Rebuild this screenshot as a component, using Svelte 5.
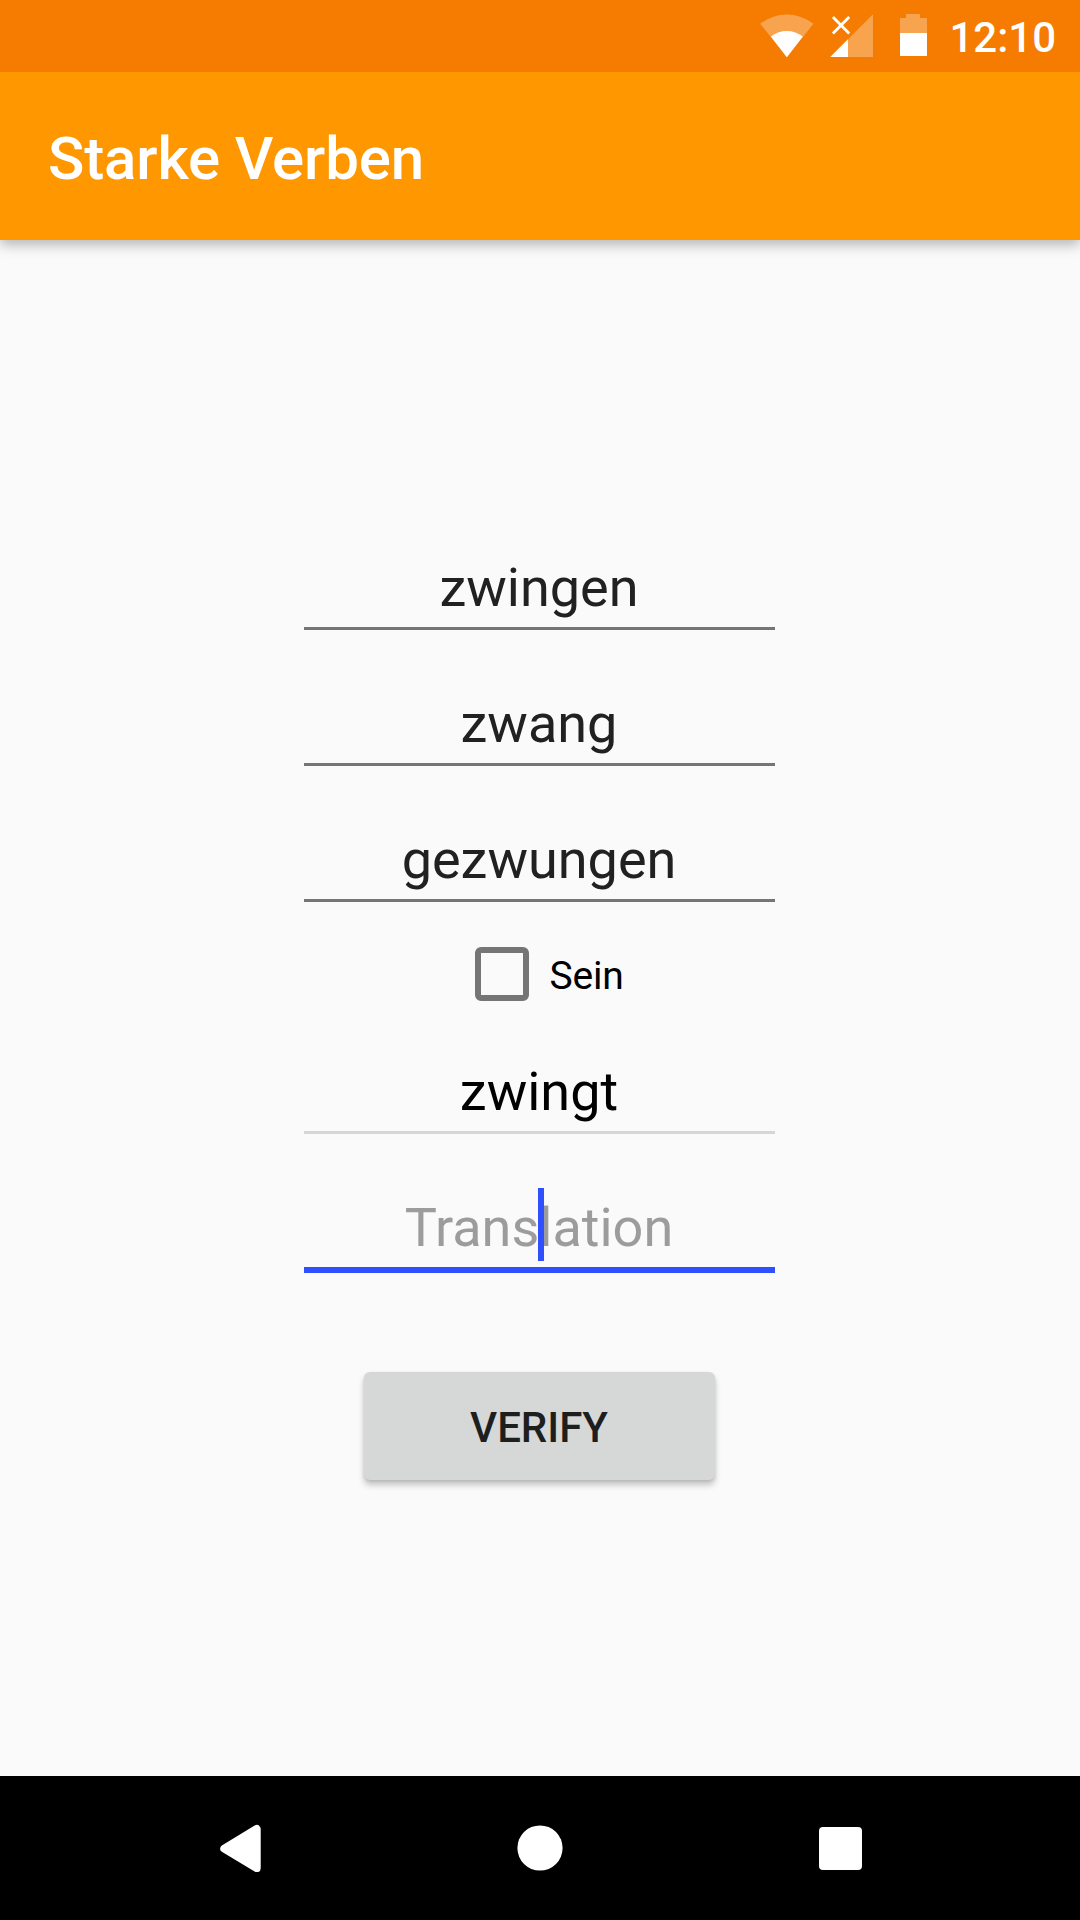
<script>
  const forms = ['zwingen', 'zwang', 'gezwungen'];
  let sein = $state(false);
</script>

<div class="screen">
  <header class="status">
    <svg class="wifi" viewBox="0 0 54 44" width="54" height="44" aria-hidden="true">
      <path d="M27 43.2 .2 9.8a42.8 42.8 0 0 1 53.2 0z" fill="#fff" fill-opacity=".3" />
      <path d="M26.8 43.2 10.8 22.6a25.8 25.8 0 0 1 32 0z" fill="#fff" />
    </svg>
    <svg class="signal" viewBox="0 0 44 44" width="44" height="44" aria-hidden="true">
      <path d="M.3 43H43V.3z" fill="#fff" fill-opacity=".3" />
      <path d="M.3 43H18V25.3z" fill="#fff" />
      <path d="M2.9 3.1 19.2 19.4M19.2 3.1 2.9 19.4" stroke="#fff" stroke-width="2.8" />
    </svg>
    <svg class="battery" viewBox="0 0 27 42" width="27" height="42" aria-hidden="true">
      <path d="M0 4h6V0h14v4h7v15H0z" fill="#fff" fill-opacity=".3" />
      <path d="M0 19h27v23H0z" fill="#fff" />
    </svg>
    <span class="clock">12:10</span>
  </header>

  <div class="toolbar"><h1>Starke Verben</h1></div>

  <main>
    {#each forms as form}
      <div class="field"><span>{form}</span></div>
    {/each}

    <label class="check">
      <input type="checkbox" bind:checked={sein} />
      <span>Sein</span>
    </label>

    <div class="field disabled"><span>zwingt</span></div>
    <div class="field focused"><span>Translation</span><i class="caret"></i></div>

    <button type="button">VERIFY</button>
  </main>

  <nav>
    <svg viewBox="0 0 48 48" width="48" height="48" aria-label="Back">
      <path d="M9.3 24.6 41.7 5V44.2z" fill="#fff" stroke="#fff" stroke-width="8" stroke-linejoin="round" />
    </svg>
    <svg viewBox="0 0 48 48" width="48" height="48" aria-label="Home">
      <circle cx="24" cy="24" r="22.6" fill="#fff" />
    </svg>
    <svg viewBox="0 0 48 48" width="48" height="48" aria-label="Recent apps">
      <rect x="2" y="3" width="43" height="43" rx="4" fill="#fff" />
    </svg>
  </nav>
</div>

<style>
  :global(body) {
    margin: 0;
  }
  .screen {
    width: 1080px;
    height: 1920px;
    display: flex;
    flex-direction: column;
    background: #fafafa;
    font-family: Roboto, sans-serif;
    overflow: hidden;
  }
  .status {
    z-index: 1;
    height: 72px;
    flex: none;
    box-sizing: border-box;
    background: #f57c00;
    display: flex;
    align-items: flex-start;
    justify-content: flex-end;
    padding: 14px 24px 0 0;
  }
  .signal {
    margin-left: 16px;
  }
  .battery {
    margin-left: 26px;
  }
  .clock {
    margin-left: 22px;
    color: #fff;
    font-size: 42px;
    font-weight: 500;
    line-height: 48px;
  }
  .toolbar {
    height: 168px;
    flex: none;
    box-sizing: border-box;
    background: #ff9800;
    display: flex;
    align-items: center;
    padding-left: 48px;
    box-shadow: 0 5px 12px rgba(0, 0, 0, 0.27);
  }
  h1 {
    margin: 0;
    padding-top: 6px;
    color: #fff;
    font-size: 60px;
    font-weight: 500;
    line-height: 70px;
    letter-spacing: -0.12px;
  }
  main {
    flex: 1;
    display: flex;
    flex-direction: column;
    align-items: center;
    padding: 254px 1px 0 0;
  }
  .field {
    position: relative;
    width: 471px;
    height: 136px;
    box-sizing: border-box;
    display: flex;
    align-items: flex-end;
    justify-content: center;
    padding: 0 1px 8px 0;
    border-bottom: 3px solid #757575;
    color: #212121;
    font-size: 54px;
    line-height: 63px;
  }
  .disabled {
    height: 88px;
    color: #000;
    border-color: #d6d6d6;
  }
  .focused {
    height: 139px;
    color: #9c9c9c;
    border-bottom: 6px solid #304ffe;
  }
  .caret {
    position: absolute;
    left: 234px;
    bottom: 0;
    margin-bottom: 6px;
    width: 6px;
    height: 73px;
    background: #304ffe;
  }
  .check {
    height: 144px;
    display: flex;
    align-items: center;
    gap: 21px;
    padding-left: 19px;
    color: #000;
    font-size: 39px;
    line-height: 46px;
    letter-spacing: -0.25px;
  }
  .check span {
    padding-top: 3px;
  }
  .check input {
    appearance: none;
    box-sizing: border-box;
    width: 54px;
    height: 54px;
    margin: 0;
    border: 6px solid #757575;
    border-radius: 6px;
  }
  button {
    width: 351px;
    height: 108px;
    margin-top: 99px;
    padding: 3px 1px 0 0;
    border: 0;
    border-radius: 6px;
    background: #d6d8d7;
    box-shadow: 0 5px 6px rgba(0, 0, 0, 0.22), 0 1px 3px rgba(0, 0, 0, 0.1);
    color: #1d1e1e;
    font: 500 42px / 48px Roboto, sans-serif;
  }
  nav {
    height: 144px;
    flex: none;
    background: #000;
    display: flex;
    align-items: center;
    justify-content: center;
    gap: 253px;
  }
</style>
